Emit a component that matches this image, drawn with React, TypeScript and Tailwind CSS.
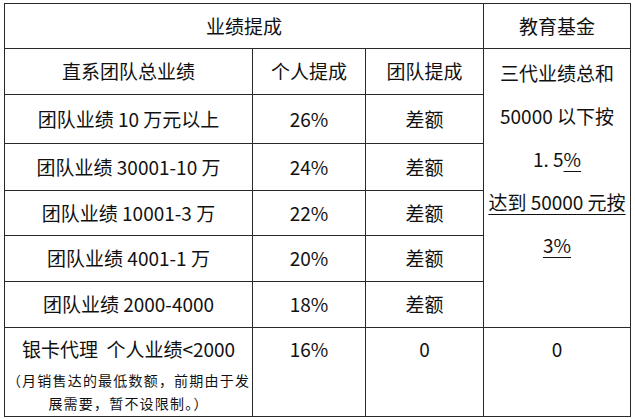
import React from "react";

const rows = [
  { label: "团队业绩 10 万元以上", p: "26%", t: "差额", h: "h-[49px]" },
  { label: "团队业绩 30001-10 万", p: "24%", t: "差额", h: "h-[47px]" },
  { label: "团队业绩 10001-3 万", p: "22%", t: "差额", h: "h-[45px]" },
  { label: "团队业绩 4001-1 万", p: "20%", t: "差额", h: "h-[46px]" },
  { label: "团队业绩 2000-4000", p: "18%", t: "差额", h: "h-[46px]" },
];

export default function App() {
  const cell = "border border-[#2a2a2a] text-center align-middle p-0";
  return (
    <div
      className="w-[635px] h-[419px] bg-white pl-[4px] pt-[3px] text-[#111] text-[19px]"
      style={{ fontFamily: '"Noto Sans CJK SC", "Noto Sans", sans-serif' }}
    >
      <table className="table-fixed border-collapse w-[626px]">
        <colgroup>
          <col className="w-[248px]" />
          <col className="w-[113px]" />
          <col className="w-[118px]" />
          <col className="w-[147px]" />
        </colgroup>
        <tbody>
          <tr className="h-[45px]">
            <td colSpan={3} className={cell}>业绩提成</td>
            <td className={cell}>教育基金</td>
          </tr>
          <tr className="h-[46px]">
            <td className={cell}>直系团队总业绩</td>
            <td className={cell}>个人提成</td>
            <td className={cell}>团队提成</td>
            <td rowSpan={6} className={`${cell} align-top`}>
              <div className="flex flex-col items-center pt-[2px] leading-[43px]">
                <div>三代业绩总和</div>
                <div>50000 以下按</div>
                <div>
                  1. 5<span className="underline underline-offset-[4px]">%</span>
                </div>
                <div className="underline underline-offset-[4px]">达到 50000 元按</div>
                <div className="underline underline-offset-[4px]">3%</div>
              </div>
            </td>
          </tr>
          {rows.map((r) => (
            <tr key={r.label} className={r.h}>
              <td className={cell}>{r.label}</td>
              <td className={cell}>{r.p}</td>
              <td className={cell}>{r.t}</td>
            </tr>
          ))}
          <tr className="h-[89px]">
            <td className={`${cell} align-top`}>
              <div className="leading-[42px]">银卡代理&nbsp;&nbsp;个人业绩&lt;2000</div>
              <div className="text-[14px] tracking-[1.2px] leading-[23px] -mt-[1px]">
                （月销售达的最低数额，前期由于发
                <br />
                展需要，暂不设限制。）
              </div>
            </td>
            <td className={`${cell} align-top leading-[42px]`}>16%</td>
            <td className={`${cell} align-top leading-[42px]`}>0</td>
            <td className={`${cell} align-top leading-[42px]`}>0</td>
          </tr>
        </tbody>
      </table>
    </div>
  );
}
